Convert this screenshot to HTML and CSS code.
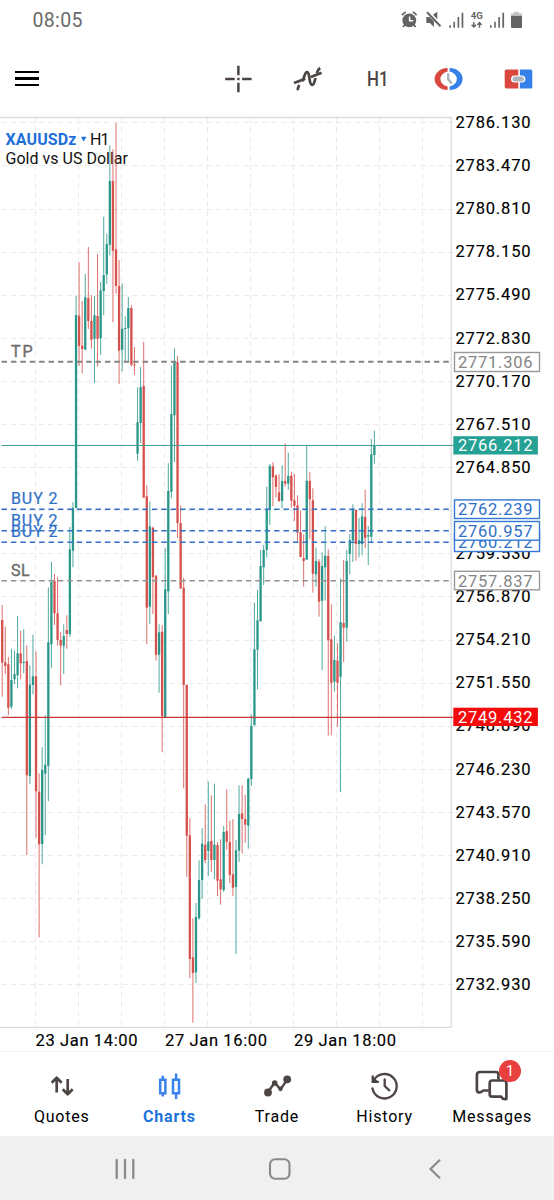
FILE: index.html
```html
<!DOCTYPE html>
<html lang="en">
<head>
<meta charset="utf-8">
<title>XAUUSDz H1</title>
<link rel="stylesheet" href="styles.css">
</head>
<body>
<div class="app">
  <header class="status">
    <span class="time">08:05</span>
    <svg class="status-icons" width="126" height="24" viewBox="399 8 126 24">
      <g fill="#636363">
        <circle cx="409.3" cy="20.3" r="6.9"/>
        <path d="M405 24.5l-2 2.6M413.700 24.500l2 2.600M402 15.200a9 9 0 0 1 3.800-3.200M416.600 15.200a9 9 0 0 0-3.800-3.200" stroke="#636363" stroke-width="1.700" fill="none"/>
        <path d="M409.600 16.500v4.200h3.600" stroke="#fff" stroke-width="1.500" fill="none"/>
        <path d="M426.300 17h3.300l4.300 4.300v5.800l-4-4h-3.600zM433 14.700l4.300-3v7.600z"/>
        <path d="M427.800 11.700L441.300 25.700" stroke="#fff" stroke-width="1.500"/>
        <path d="M427 12.300L440.500 26.300" stroke="#636363" stroke-width="2"/>
        <path d="M449.300 25.300h1.600v2.500h-1.600zM453.400 21.700h1.600v6.100h-1.600zM457.600 17h1.600v10.800h-1.600zM461.600 12.700h1.700v15.100h-1.700z"/>
        <path d="M490 25.300h1.600v2.500H490zM494.200 21.700h1.600v6.100h-1.600zM498.300 17h1.600v10.800h-1.600zM502.400 12.700h1.700v15.100h-1.700z"/>
        <path d="M473.800 22v5M471.600 24.800l2.200 2.300 2.200-2.300M479.500 27.800v-5M477.300 24.900l2.200-2.300 2.200 2.300" stroke="#636363" stroke-width="1.400" fill="none"/>
        <path d="M511 15.500h11v11.500q0 1-1 1h-9q-1 0-1-1z"/>
        <path d="M511 15.500v-2h3v-1.700h5v1.700h3v2z" fill="#c4c4c4"/>
      </g>
      <text class="net" x="470.800" y="19.300" textLength="12" lengthAdjust="spacingAndGlyphs">4G</text>
    </svg>
  </header>

  <nav class="toolbar">
    <button class="menu" aria-label="Menu"><i></i><i></i><i></i></button>
    <div class="tools">
      <button class="tool" aria-label="Crosshair">
        <svg width="30" height="30" viewBox="-15.400 -15 30 30" stroke="#4c4543" stroke-width="2.500"><path d="M0-13.200v9.500M0 3.700v9.500M-13.200 0h9.500M3.700 0h9.500M-1.200 0h2.400"/></svg>
      </button>
      <button class="tool" aria-label="Indicators">
        <svg width="32" height="30" viewBox="292 63.500 32 30" fill="none" stroke="#4c4543" stroke-width="2.700">
          <path d="M294 82.400L305.300 78.200M310.800 76.500L321.600 72.300"/>
          <path d="M297.700 89.800Q297.800 87 299.300 84.500M302.300 80.800C304.500 77 304.600 71.600 307.200 71.600C310.200 71.800 308.500 83.700 312 84.300C314.200 84.500 314.500 81 315.500 77.500M316.800 72.500Q317.800 69 320.200 67.500"/>
        </svg>
      </button>
      <button class="tool"><span class="frame">H1</span></button>
      <button class="tool" aria-label="Quick trade">
        <svg width="30" height="26" viewBox="-15.600 -13 30 26">
          <path d="M-1-10.900A13 10.900 0 0 0-1 10.900V7.600A9.300 7.800 0 0 1-1-7.600z" fill="#d9473f"/>
          <path d="M1-10.900A13 10.900 0 0 1 1 10.900V7.600A9.300 7.800 0 0 0 1-7.600z" fill="#3480e8"/>
          <path d="M-.4-5.800V0L3.200 4.500" fill="none" stroke="#a9b4bd" stroke-width="2.400"/>
        </svg>
      </button>
      <button class="tool" aria-label="Order panel">
        <svg width="30" height="26" viewBox="-15.500 -13 30 26">
          <path d="M-12-9.500H-.2V9.500H-12q-1.800 0-1.800-1.800V-7.700q0-1.800 1.800-1.800z" fill="#d9473f"/>
          <path d="M12.200-9.500H1.400V9.500H12.200q1.600 0 1.600-1.600V-7.900q0-1.600-1.600-1.600z" fill="#3480e8"/>
          <rect x="-7.500" y="-3.600" width="14.400" height="7.200" rx="3.600" fill="#fff"/>
          <rect x="-6" y="-2.500" width="11.500" height="5" rx="2.500" fill="#a9b4bd"/>
        </svg>
      </button>
    </div>
  </nav>

  <main class="chart">
    <svg width="554" height="934" viewBox="0 117 554 934">
      <g id="grid" class="grid"></g>
      <path class="border" d="M0 117.500H451.200V1027.300H0"/>
      <g class="title">
        <text class="symbol" x="5.500" y="144.700" textLength="71">XAUUSDz</text>
        <path d="M81 136.800h5.400l-2.700 4.800z" fill="#1e6fd9"/>
        <text x="90" y="144.700" textLength="19.500">H1</text>
        <text x="5.500" y="164" textLength="122.500">Gold vs US Dollar</text>
      </g>
      <g id="candles"></g>
      <g class="levels">
        <path class="level stop" d="M1.500 361.700H451"/>
        <path class="level buy" d="M1.500 509.200H451M1.500 530.700H451M1.500 542.300H451"/>
        <path class="level sl" d="M1.500 580.700H451"/>
        <path d="M1.500 445.500H453" stroke="#3fa096" stroke-width="1.200"/>
        <path d="M1.500 717.300H453" stroke="#c9363b" stroke-width="1.200"/>
      </g>
      <g class="order-labels">
        <text class="grey" x="11" y="356.500" textLength="21.500">TP</text>
        <text x="11" y="504" textLength="46.500">BUY 2</text>
        <text x="11" y="537" textLength="46.500">BUY 2</text>
        <text x="11" y="525.500" textLength="46.500">BUY 2</text>
        <text class="grey" x="11" y="575.500" textLength="18.500">SL</text>
      </g>
      <g id="prices" class="axis"></g>
      <g class="axis">
        <text x="35.500" y="1045.700" textLength="102">23 Jan 14:00</text>
        <text x="165" y="1045.700" textLength="102">27 Jan 16:00</text>
        <text x="294" y="1045.700" textLength="102">29 Jan 18:00</text>
      </g>
      <g class="tags">
        <g class="tag grey"><rect x="454.500" y="352.500" width="85" height="19"/><text x="458" y="368" textLength="74.500">2771.306</text></g>
        <g class="tag now"><rect x="453.300" y="436.200" width="84.600" height="18.300"/><text x="458" y="451.300" textLength="74.500">2766.212</text></g>
        <g class="tag blue"><rect x="454.500" y="499.900" width="85" height="18.600"/><text x="458" y="515" textLength="74.500">2762.239</text></g>
        <g class="tag blue"><rect x="454.500" y="533" width="85" height="18.500"/><text x="458" y="548.300" textLength="74.500">2760.212</text></g>
        <g class="tag blue"><rect x="454.500" y="521.500" width="85" height="18.700"/><text x="458" y="536.700" textLength="74.500">2760.957</text></g>
        <g class="tag grey"><rect x="454.500" y="571.300" width="85" height="18.500"/><text x="458" y="586.500" textLength="74.500">2757.837</text></g>
        <g class="tag bid"><rect x="453.300" y="707.700" width="84.600" height="18.300"/><text x="458" y="722.800" textLength="74.500">2749.432</text></g>
      </g>
    </svg>
  </main>

  <nav class="tabs">
    <a class="tab">
      <svg width="34" height="36" viewBox="45 1070 34 36" fill="none" stroke="#4c4543" stroke-width="2.700" stroke-linejoin="round"><path d="M56.700 1093.500V1079M51.700 1083.700l5-5 5 5M67.700 1080V1095M62.700 1090.300l5 5 5-5"/></svg>
      <span>Quotes</span>
    </a>
    <a class="tab active">
      <svg width="34" height="36" viewBox="152.300 1070 34 36" fill="none" stroke="#3b82ec" stroke-width="2.500"><path d="M160.500 1080.700h5.200v13.600h-5.200zM163.100 1076.700v4M163.100 1094.300v3.200M173.300 1080.700h6v13.600h-6zM176.400 1074.500v6.200M176.400 1094.300v5.700"/></svg>
      <span>Charts</span>
    </a>
    <a class="tab">
      <svg width="34" height="36" viewBox="260 1070 34 36" fill="#4c4543"><path d="M267.700 1093.500L274.700 1083.500 280.500 1090.500 287.300 1080.300" fill="none" stroke="#4c4543" stroke-width="2.400"/><circle cx="268" cy="1093.500" r="3.900"/><circle cx="274.700" cy="1084" r="2.800"/><circle cx="280.500" cy="1089.700" r="2.200"/><circle cx="287.200" cy="1080.300" r="3.900"/></svg>
      <span>Trade</span>
    </a>
    <a class="tab">
      <svg width="34" height="36" viewBox="368 1070 34 36" fill="none" stroke="#4c4543" stroke-width="2.300" stroke-linecap="round"><path d="M373.700 1081.500A12.200 12.200 0 1 1 372.500 1089.500M372.700 1077.500v5.300h5.300"/><path d="M384.700 1080.500v6.500l4.600 4.300"/><path d="M373 1077.500v5h5z" fill="#4c4543" stroke="none"/></svg>
      <span>History</span>
    </a>
    <a class="tab">
      <svg width="34" height="36" viewBox="475.300 1070 34 36" fill="none" stroke="#4c4543" stroke-width="2.700" stroke-linejoin="round"><path d="M479 1093.500Q477 1093 477.200 1089.500V1076q0-3 3-3h16q2.500 0 2.500 2.500V1080.500M489 1091.500H483.500Q481.500 1094 478.700 1093.300"/><path d="M492.500 1081.500h11.500q2.700 0 2.700 2.700V1100Q503.500 1101 501.500 1097.700H492.500q-2.500 0-2.500-2.500V1084q0-2.500 2.500-2.500z"/></svg>
      <b class="badge">1</b>
      <span>Messages</span>
    </a>
  </nav>

  <footer class="system">
    <svg width="554" height="64" viewBox="0 1136 554 64" fill="none" stroke="#8a8a8a">
      <path d="M116.700 1160v18M125 1160v18M133.300 1160v18" stroke-width="2.300" stroke-linecap="round"/>
      <rect x="270" y="1159.300" width="19.500" height="19.400" rx="5.200" stroke-width="2.100"/>
      <path d="M440 1159.700L430.500 1169l9.500 9.300" stroke-width="2.200"/>
    </svg>
  </footer>
</div>
<script src="chart.js"></script>
</body>
</html>
```

FILE: styles.css
```css
* { box-sizing: border-box; }
body { margin: 0; background: #fff; font-family: Roboto, "Liberation Sans", sans-serif; color: #111; }
button { border: 0; padding: 0; background: none; font: inherit; color: inherit; }
svg { display: block; }
.app { width: 554px; height: 1200px; display: flex; flex-direction: column; }

.status { height: 40px; padding: 0 29px 0 32.500px; display: flex; align-items: center; justify-content: space-between; }
.time { font-size: 19.500px; letter-spacing: .35px; color: #6a6a6a; }
.net { font-size: 9.500px; font-weight: 700; fill: #636363; }

.toolbar { height: 77px; padding: 0 1px 0 15px; display: flex; align-items: center; justify-content: space-between; }
.menu { width: 24px; display: flex; flex-direction: column; gap: 4.200px; }
.menu i { height: 2.500px; background: #000; }
.tools { display: flex; }
.tool { width: 70px; height: 40px; display: flex; align-items: center; justify-content: center; }
.frame { font-size: 20px; font-weight: 500; color: #4c4543; transform: scaleX(.84); }

.chart { height: 934px; }
.chart svg { overflow: visible; }
.grid { stroke: #ebebeb; stroke-width: 1; stroke-dasharray: 5.500 3.800; }
.border { fill: none; stroke: #dcdcdc; stroke-width: 1.300; }
.title { font-size: 16px; fill: #111; }
.symbol { font-weight: 700; fill: #1e6fd9; }
.up { fill: #2a978a; }
.down { fill: #d6504c; }
.wick { opacity: .82; }
.level { fill: none; stroke-width: 1.500; stroke-dasharray: 5.500 3.900; }
.stop { stroke: #858585; stroke-width: 2; }
.sl { stroke: #929292; }
.buy { stroke: #3271c9; }
.order-labels { font-size: 16px; fill: #2f6fc6; stroke: #2f6fc6; stroke-width: .2; }
.order-labels .grey { fill: #6e6e6e; stroke: #6e6e6e; stroke-width: .4; }
.axis { font-size: 16.500px; fill: #000; stroke: #000; stroke-width: .15; }
.tag { font-size: 16.500px; }
.tag rect { fill: #fff; stroke-width: 1.400; }
.tag.grey rect { stroke: #999; }
.tag.grey text { fill: #858585; }
.tag.blue rect { stroke: #3577d4; }
.tag.blue text { fill: #2f6fc6; }
.tag.now rect { fill: #26a196; }
.tag.bid rect { fill: #f40a0a; }
.tag.now text, .tag.bid text { fill: #fff; }

.tabs { height: 85px; padding: 0 8px; border-top: 1px solid #f2f2f2; display: flex; }
.tab { position: relative; flex: 1; padding-top: 17px; display: flex; flex-direction: column; align-items: center; font-size: 16px; letter-spacing: .8px; color: #000; }
.tab span { margin-top: 1.500px; line-height: 20px; }
.tab.active { font-weight: 700; color: #1b74dc; }
.badge { position: absolute; left: 60.500px; top: 8px; width: 22px; height: 22px; border-radius: 50%; background: #e8403f; color: #fff; font-size: 15px; font-weight: 400; line-height: 22px; letter-spacing: 0; text-align: center; }
.system { height: 64px; background: #f0f0f0; }
```

FILE: chart.js
```javascript
const NS = 'http://www.w3.org/2000/svg';
function add(parent, tag, attrs, text) {
  const el = document.createElementNS(NS, tag);
  for (const k in attrs) el.setAttribute(k, attrs[k]);
  if (text) el.textContent = text;
  parent.appendChild(el);
}

const grid = document.getElementById('grid');
const prices = document.getElementById('prices');
for (let i = 0; i < 21; i++) {
  const y = 122.300 + i * 43.100;
  add(grid, 'path', { d: `M1.500 ${Math.round(y) + .5}H456` });
  add(prices, 'text', { x: 455.500, y: y + 5.700, textLength: 75 }, (2786.130 - i * 2.660).toFixed(3));
}
for (let i = 0; i < 10; i++) {
  add(grid, 'path', { d: `M${Math.round(34.600 + i * 43.070) + .5} 118V${i % 3 ? 1027 : 1031}` });
}

// Each candle: direction, high, body top, body bottom, low
const data = `
d 605 620 662.7 696.7|d 626.7 662.3 666 674|d 657 664.3 707.7 715|u 648.7 680 706.7 709|u 650.7 674 679.3 684
u 616 653.3 675.3 688.3|d 630.7 653.3 663.3 679.3|u 629.3 662 663 673.3|d 645.3 661 775.3 855|u 665.3 684.7 776 784.3
u 634.7 676.3 685 694.3|d 651.7 676.3 791.3 837.7|d 773.3 791.7 844.3 937.3|u 747 770 844 864.3|u 715.3 764.7 773.7 835
u 587.3 642.3 765.7 801.3|u 561.7 582 644.3 668.3|d 574 581 613.3 625|d 577.3 613.3 640 645.7|d 631.7 640 645.7 685.3
u 624.3 636 645.7 674|d 615.3 630 634 648.7|u 527 549.3 634 636.7|u 502.3 508 550.7 567.3|u 295.7 315 508 508
d 262.3 315.7 346 366|d 301 345.7 349 373.3|u 274 297.3 349.7 349.7|d 247 298 321 329|d 295 321 339.7 348.7
u 296 315.3 338.7 383|d 254.3 316 338.7 366.7|u 282 290.3 338.3 355|u 216.7 275 291 315|u 234 244 274.3 283.7
u 145.3 181 244.7 255.3|d 149.3 181 250.7 322.3|d 123 249.3 286 293.7|d 260 286 350.7 384|u 283.3 328.7 349.7 371.3
u 316.3 328 329 362.3|u 297 308 328.3 362.3|d 305 308 364.7 366.7|d 347 364.3 365.3 375|u 387.3 422.3 453.7 460.7
u 366.7 387.3 423 443|d 341.7 386 497.7 497.7|d 485.3 496.3 607.7 644|u 501.7 526.3 606.7 624|d 526.7 527.7 577 614
d 575 575.7 654.7 660.7|u 624.3 632.3 654.7 692.7|d 625 631.7 716 752|u 548.3 589.3 717.3 717.3|u 463.3 491 591.3 614
u 365.7 414 491.7 498.3|u 348.3 362 415.3 462|d 356 362 523 538|d 505.7 523 588.3 589|d 577.7 587.7 685 788.3
d 684.3 685 835.7 876.7|d 818.3 835.3 959 978.3|d 918.3 957.3 973 1022.7|u 903 917 972.3 983|u 860.3 880 918 919.7
u 828 843.7 880 899|d 804.3 844.7 860 863|u 781.7 841.7 851 876|d 795.3 841 860 871.7|u 783.7 844.7 860 879
d 842 845 880.7 896|d 839.3 879.3 889.3 904.7|u 826 832 890 892|d 789.3 831 841.7 849.7|d 820.7 842 875 883.3
d 819 874.3 887.7 896|u 840 850.3 887 954|u 785.3 814 850.7 861.7|d 785.3 813.3 819 853.3|d 794.7 819 824.7 842.7
u 777.7 778.7 825.7 848.7|u 714.7 726 779 786|u 602.7 649.3 725.3 725.3|u 590 620.3 649.7 689.3|u 550 566 621.3 621.3
u 545 550 567.3 585|u 486.7 509 550 557.3|u 464 466 509.7 525|d 462.3 466.3 477.3 506|d 474.3 475.7 487 497.3
d 474.3 492.3 501 502|u 465.3 481 501 508.3|d 443.3 481 483.7 486.7|u 452.7 475.7 483.7 489.7|d 471.7 475.7 500.7 507.7
d 474 500.3 505.7 521|d 495.3 505.3 532.7 542.3|d 510.7 532.3 557 557.3|d 534.3 558 561 586.7|u 445.7 480.7 559.7 559.7
d 472.3 481 499.3 538.7|d 488.3 500.3 573.7 592.7|u 547.7 561 574.3 586.7|d 559 561.7 601.7 616.7|u 552.3 566 600.7 670
u 526 555.7 567.3 600.7|d 549.3 556 640.3 735.7|d 604.3 639.3 682.7 735.3|u 635.7 660 681.7 691.7|d 643.3 660.7 682.7 726.7
u 578.3 622.3 676.7 792|d 560 623 627.7 662|u 550 561 627.7 641.7|u 534 540 554 574.3|u 504.3 509.3 540.7 562
d 509.3 510 544 560.7|u 517.7 540.3 544 557.3|u 503.3 516.3 544 555.3|d 489.7 517 538 548.3|u 526 535 536.7 565
u 439 454.3 536.7 542|u 430.7 445.7 455 463.7`.trim().split(/[|\n]/);

const candles = document.getElementById('candles');
data.forEach((row, i) => {
  const [dir, ...v] = row.split(' ');
  const [high, top, bottom, low] = v.map(Number);
  const cls = dir === 'u' ? 'up' : 'down';
  const x = 2.200 + i * 3.076;
  add(candles, 'rect', { class: cls + ' wick', x: x - .5, y: high, width: 1, height: low - high });
  add(candles, 'rect', { class: cls, x: x - 1.150, y: top, width: 2.300, height: bottom - top });
});
```
